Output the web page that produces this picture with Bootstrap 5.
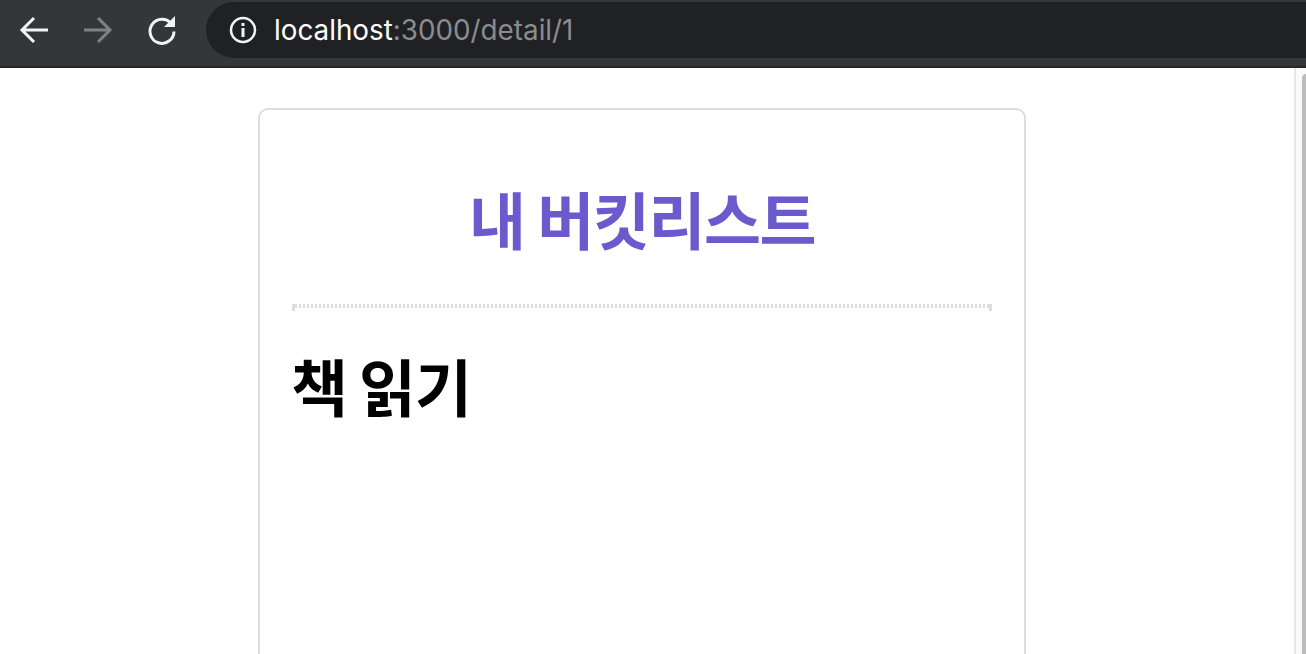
<!DOCTYPE html>
<html lang="ko">
<head>
  <meta charset="UTF-8">
  <title>내 버킷리스트</title>
  <link href="https://cdn.jsdelivr.net/npm/bootstrap@5.3.3/dist/css/bootstrap.min.css" rel="stylesheet">
  <style>
    html, body {
      height: 100%;
      overflow: hidden;
    }
    body {
      background-color: #fff;
      font-family: "Noto Sans CJK KR", "Noto Sans", sans-serif;
    }
    .chrome-bar {
      height: 68px;
      padding: 2px 0 8px 0;
      background-color: #35363a;
      border-bottom: 2px solid #26272a;
    }
    .nav-btns {
      width: 206px;
      padding-left: 17px;
      gap: 30px;
    }
    .url-box {
      height: 56px;
      padding-left: 23px;
      background-color: #202124;
      border-radius: 28px 0 0 28px;
      font-family: Inter, "Liberation Sans", sans-serif;
      font-size: 27.8px;
      color: #fff;
    }
    .url-text {
      margin-left: 1px;
      padding-top: 1px;
    }
    .url-rest {
      color: #8b8c8e;
    }
    .page-area {
      height: 586px;
    }
    .page-scroll {
      width: 12px;
      padding-left: 6px;
      padding-top: 6px;
      background-color: #fafafa;
      border-left: 2px solid #e8e8e8;
    }
    .scroll-thumb {
      height: 100%;
      background-color: #bcbcbc;
      border-radius: 4px 0 0 0;
    }
    .bucket-card {
      width: 768px;
      height: 640px;
      margin: 40px 0 0 258px;
      padding: 32px;
      border: 2px solid #ddd;
      border-radius: 10px;
    }
    .bucket-title {
      margin: 0;
      padding: 36px 0 32px;
      color: slateblue;
      font-size: 62px;
      font-weight: 700;
      line-height: 80px;
      text-align: center;
      letter-spacing: -1.5px;
      word-spacing: -3px;
    }
    .dot-line {
      height: 7px;
      margin-top: 14px;
      border-left: 3px solid #ddd;
      border-right: 3px solid #ddd;
      background: repeating-linear-gradient(90deg, #ddd 0 2px, #fff 2px 4px) top / 100% 4px no-repeat;
    }
    .bucket-text {
      margin: 30px 0 0 -1px;
      color: #000;
      font-size: 62px;
      font-weight: 700;
      line-height: 88px;
      letter-spacing: -1px;
      word-spacing: -4.5px;
    }
  </style>
</head>
<body>
  <div class="chrome-bar d-flex">
    <div class="nav-btns d-flex align-items-center">
      <svg width="34" height="34" viewBox="0 0 34 34" fill="none" stroke="#f1f3f4" stroke-width="3">
        <path d="M31 17H6M17 5 5 17l12 12"/>
      </svg>
      <svg width="34" height="34" viewBox="0 0 34 34" fill="none" stroke="#808184" stroke-width="3">
        <path d="M3 17h25M17 5l12 12-12 12"/>
      </svg>
      <svg width="34" height="34" viewBox="0 0 34 34" fill="none">
        <path d="M26.500 11A12 12 0 1 0 29 18.500" stroke="#f1f3f4" stroke-width="3"/>
        <path d="M19 14h11V3z" fill="#f1f3f4"/>
      </svg>
    </div>
    <div class="url-box flex-grow-1 d-flex align-items-center gap-3">
      <svg width="28" height="28" viewBox="0 0 28 28" fill="none">
        <circle cx="14" cy="14" r="12" stroke="#f1f3f4" stroke-width="2.500"/>
        <rect x="12.500" y="12" width="3" height="9" fill="#f1f3f4"/>
        <rect x="12.500" y="7" width="3" height="3" fill="#f1f3f4"/>
      </svg>
      <span class="url-text">localhost<span class="url-rest">:3000/detail/1</span></span>
    </div>
  </div>
  <div class="page-area d-flex">
    <div class="flex-grow-1 overflow-hidden">
      <div class="bucket-card">
        <h1 class="bucket-title">내 버킷리스트</h1>
        <div class="dot-line"></div>
        <h2 class="bucket-text">책 읽기</h2>
      </div>
    </div>
    <div class="page-scroll">
      <div class="scroll-thumb"></div>
    </div>
  </div>
  <script src="https://cdn.jsdelivr.net/npm/bootstrap@5.3.3/dist/js/bootstrap.bundle.min.js"></script>
</body>
</html>
